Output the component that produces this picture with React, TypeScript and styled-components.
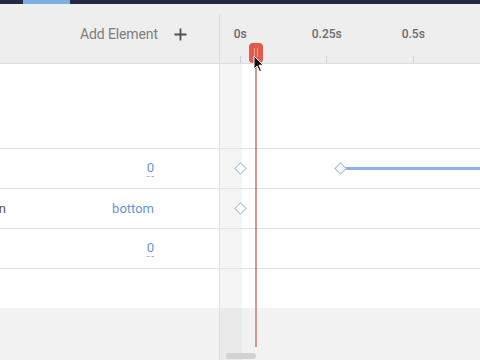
import React from "react";
import styled, { createGlobalStyle } from "styled-components";

const Global = createGlobalStyle`
  *, *::before, *::after { box-sizing: border-box; }
  html, body { margin: 0; padding: 0; background: #ffffff; }
  body { font-family: Roboto, "Liberation Sans", Arial, sans-serif; }
`;

const Frame = styled.div`
  width: 480px;
  height: 360px;
  display: flex;
  flex-direction: column;
  overflow: hidden;
  background: #ffffff;
`;

const TopBar = styled.div`
  height: 4px;
  flex: none;
  background: #252a44;
  padding-left: 23px;
`;

const TabIndicator = styled.div`
  width: 47px;
  height: 4px;
  background: #7eafe2;
`;

const Main = styled.div`
  flex: 1;
  display: flex;
  flex-direction: column;
  position: relative;
`;

const HeaderRow = styled.div`
  height: 60px;
  flex: none;
  display: flex;
  background: #eeeeee;
  border-bottom: 1px solid #dedede;
`;

const AddArea = styled.div`
  width: 219px;
  display: flex;
  align-items: center;
  justify-content: flex-end;
  gap: 16px;
  padding-right: 32px;
  padding-top: 1px;
  color: #7d7d7d;
  font-size: 14px;
  letter-spacing: -0.1px;
`;

const HeaderDivider = styled.div`
  width: 1px;
  margin-top: 11px;
  background: #dcdcdc;
`;

const Ruler = styled.div`
  flex: 1;
  overflow: hidden;
  display: flex;
`;

const RulerMarks = styled.div`
  display: flex;
  margin-left: -23px;
`;

const Mark = styled.div`
  width: 86.5px;
  flex: none;
  display: flex;
  flex-direction: column;
  align-items: center;
  justify-content: space-between;
  padding-top: 23px;
`;

const MarkLabel = styled.span`
  font-size: 12px;
  line-height: 14px;
  color: #6a6a6a;
  font-weight: 500;
`;

const Tick = styled.div`
  width: 1px;
  height: 7px;
  background: #cfcfcf;
`;

const Row = styled.div<{ $h?: number; $line?: boolean; $footer?: boolean }>`
  display: flex;
  flex: ${(p) => (p.$h ? "none" : "1")};
  height: ${(p) => (p.$h ? `${p.$h}px` : "auto")};
  border-top: ${(p) => (p.$line ? "1px solid #e3e3e3" : "none")};
  background: ${(p) => (p.$footer ? "#f2f2f2" : "#ffffff")};
`;

const LeftCell = styled.div`
  width: 219px;
  flex: none;
  display: flex;
  align-items: center;
  padding-right: 65px;
  font-size: 13px;
`;

const TrackCell = styled.div<{ $footer?: boolean }>`
  flex: 1;
  display: flex;
  align-items: center;
  border-left: 1px solid #e0e0e0;
  background: linear-gradient(
    to right,
    ${(p) => (p.$footer ? "#eaeaea" : "#f5f5f5")} 0 22px,
    transparent 22px
  );
`;

const LabelClip = styled.div`
  width: 6px;
  overflow: hidden;
  display: flex;
  justify-content: flex-end;
`;

const Label = styled.span`
  white-space: nowrap;
  color: #5a5a5a;
`;

const Value = styled.span<{ $dashed?: boolean }>`
  margin-left: auto;
  color: #6596d5;
  line-height: 14px;
  padding-bottom: ${(p) => (p.$dashed ? "1px" : "0")};
  border-bottom: ${(p) => (p.$dashed ? "1px dashed #9ab4d8" : "none")};
`;

const Diamond = styled.span<{ $gap: number }>`
  flex: none;
  width: 9px;
  height: 9px;
  margin-left: ${(p) => p.$gap}px;
  transform: rotate(45deg);
  border: 1.5px solid #a1bbdc;
  background: #ffffff;
  position: relative;
  z-index: 1;
`;

const TweenBar = styled.div`
  flex: 1;
  height: 3px;
  margin-left: -2px;
  background: #8db3e2;
`;

const ScrollTrack = styled(TrackCell)`
  align-items: flex-end;
  padding: 0 0 1px 6px;
`;

const ScrollThumb = styled.div`
  width: 30px;
  height: 6px;
  border-radius: 3px;
  background: #d2d2d2;
`;

const Playhead = styled.div`
  position: absolute;
  left: 249px;
  top: 39px;
  width: 14px;
  display: flex;
  flex-direction: column;
  align-items: center;
  pointer-events: none;
`;

const Handle = styled.div`
  width: 14px;
  height: 20px;
  border-radius: 4px;
  background: #e15a4d;
  display: flex;
  justify-content: center;
  gap: 2px;
  padding-top: 5px;
`;

const Grip = styled.span`
  width: 1px;
  height: 9px;
  background: #f09a90;
`;

const PlayLine = styled.div`
  width: 1.5px;
  height: 284px;
  background: #d9968a;
`;

const Cursor = styled.svg`
  position: absolute;
  left: 253px;
  top: 51px;
  pointer-events: none;
`;

function PlusIcon() {
  return (
    <svg width="13" height="13" viewBox="0 0 13 13">
      <path d="M6.5 0.5v12M0.5 6.5h12" stroke="#4f4f4f" strokeWidth="1.8" />
    </svg>
  );
}

export default function App() {
  const marks = ["0s", "0.25s", "0.5s"];
  return (
    <>
      <Global />
      <Frame>
        <TopBar>
          <TabIndicator />
        </TopBar>
        <Main>
          <HeaderRow>
            <AddArea>
              <span>Add Element</span>
              <PlusIcon />
            </AddArea>
            <HeaderDivider />
            <Ruler>
              <RulerMarks>
                {marks.map((m) => (
                  <Mark key={m}>
                    <MarkLabel>{m}</MarkLabel>
                    <Tick />
                  </Mark>
                ))}
              </RulerMarks>
            </Ruler>
          </HeaderRow>

          <Row $h={84}>
            <LeftCell />
            <TrackCell />
          </Row>

          <Row $h={40} $line>
            <LeftCell>
              <Value $dashed>0</Value>
            </LeftCell>
            <TrackCell>
              <Diamond $gap={15.5} />
              <Diamond $gap={91} />
              <TweenBar />
            </TrackCell>
          </Row>

          <Row $h={40} $line>
            <LeftCell>
              <LabelClip>
                <Label>Transform Origin</Label>
              </LabelClip>
              <Value>bottom</Value>
            </LeftCell>
            <TrackCell>
              <Diamond $gap={15.5} />
            </TrackCell>
          </Row>

          <Row $h={40} $line>
            <LeftCell>
              <Value $dashed>0</Value>
            </LeftCell>
            <TrackCell />
          </Row>

          <Row $h={40} $line>
            <LeftCell />
            <TrackCell />
          </Row>

          <Row $footer>
            <LeftCell />
            <ScrollTrack $footer>
              <ScrollThumb />
            </ScrollTrack>
          </Row>

          <Playhead>
            <Handle>
              <Grip />
              <Grip />
            </Handle>
            <PlayLine />
          </Playhead>

          <Cursor width="12" height="18" viewBox="0 0 12 18">
            <path
              d="M1 1 L1 14 L4 11 L6.5 16.5 L8.5 15.6 L6 10.2 L10.2 10.2 Z"
              fill="#111"
              stroke="#fff"
              strokeWidth="1"
              strokeLinejoin="round"
            />
          </Cursor>
        </Main>
      </Frame>
    </>
  );
}
